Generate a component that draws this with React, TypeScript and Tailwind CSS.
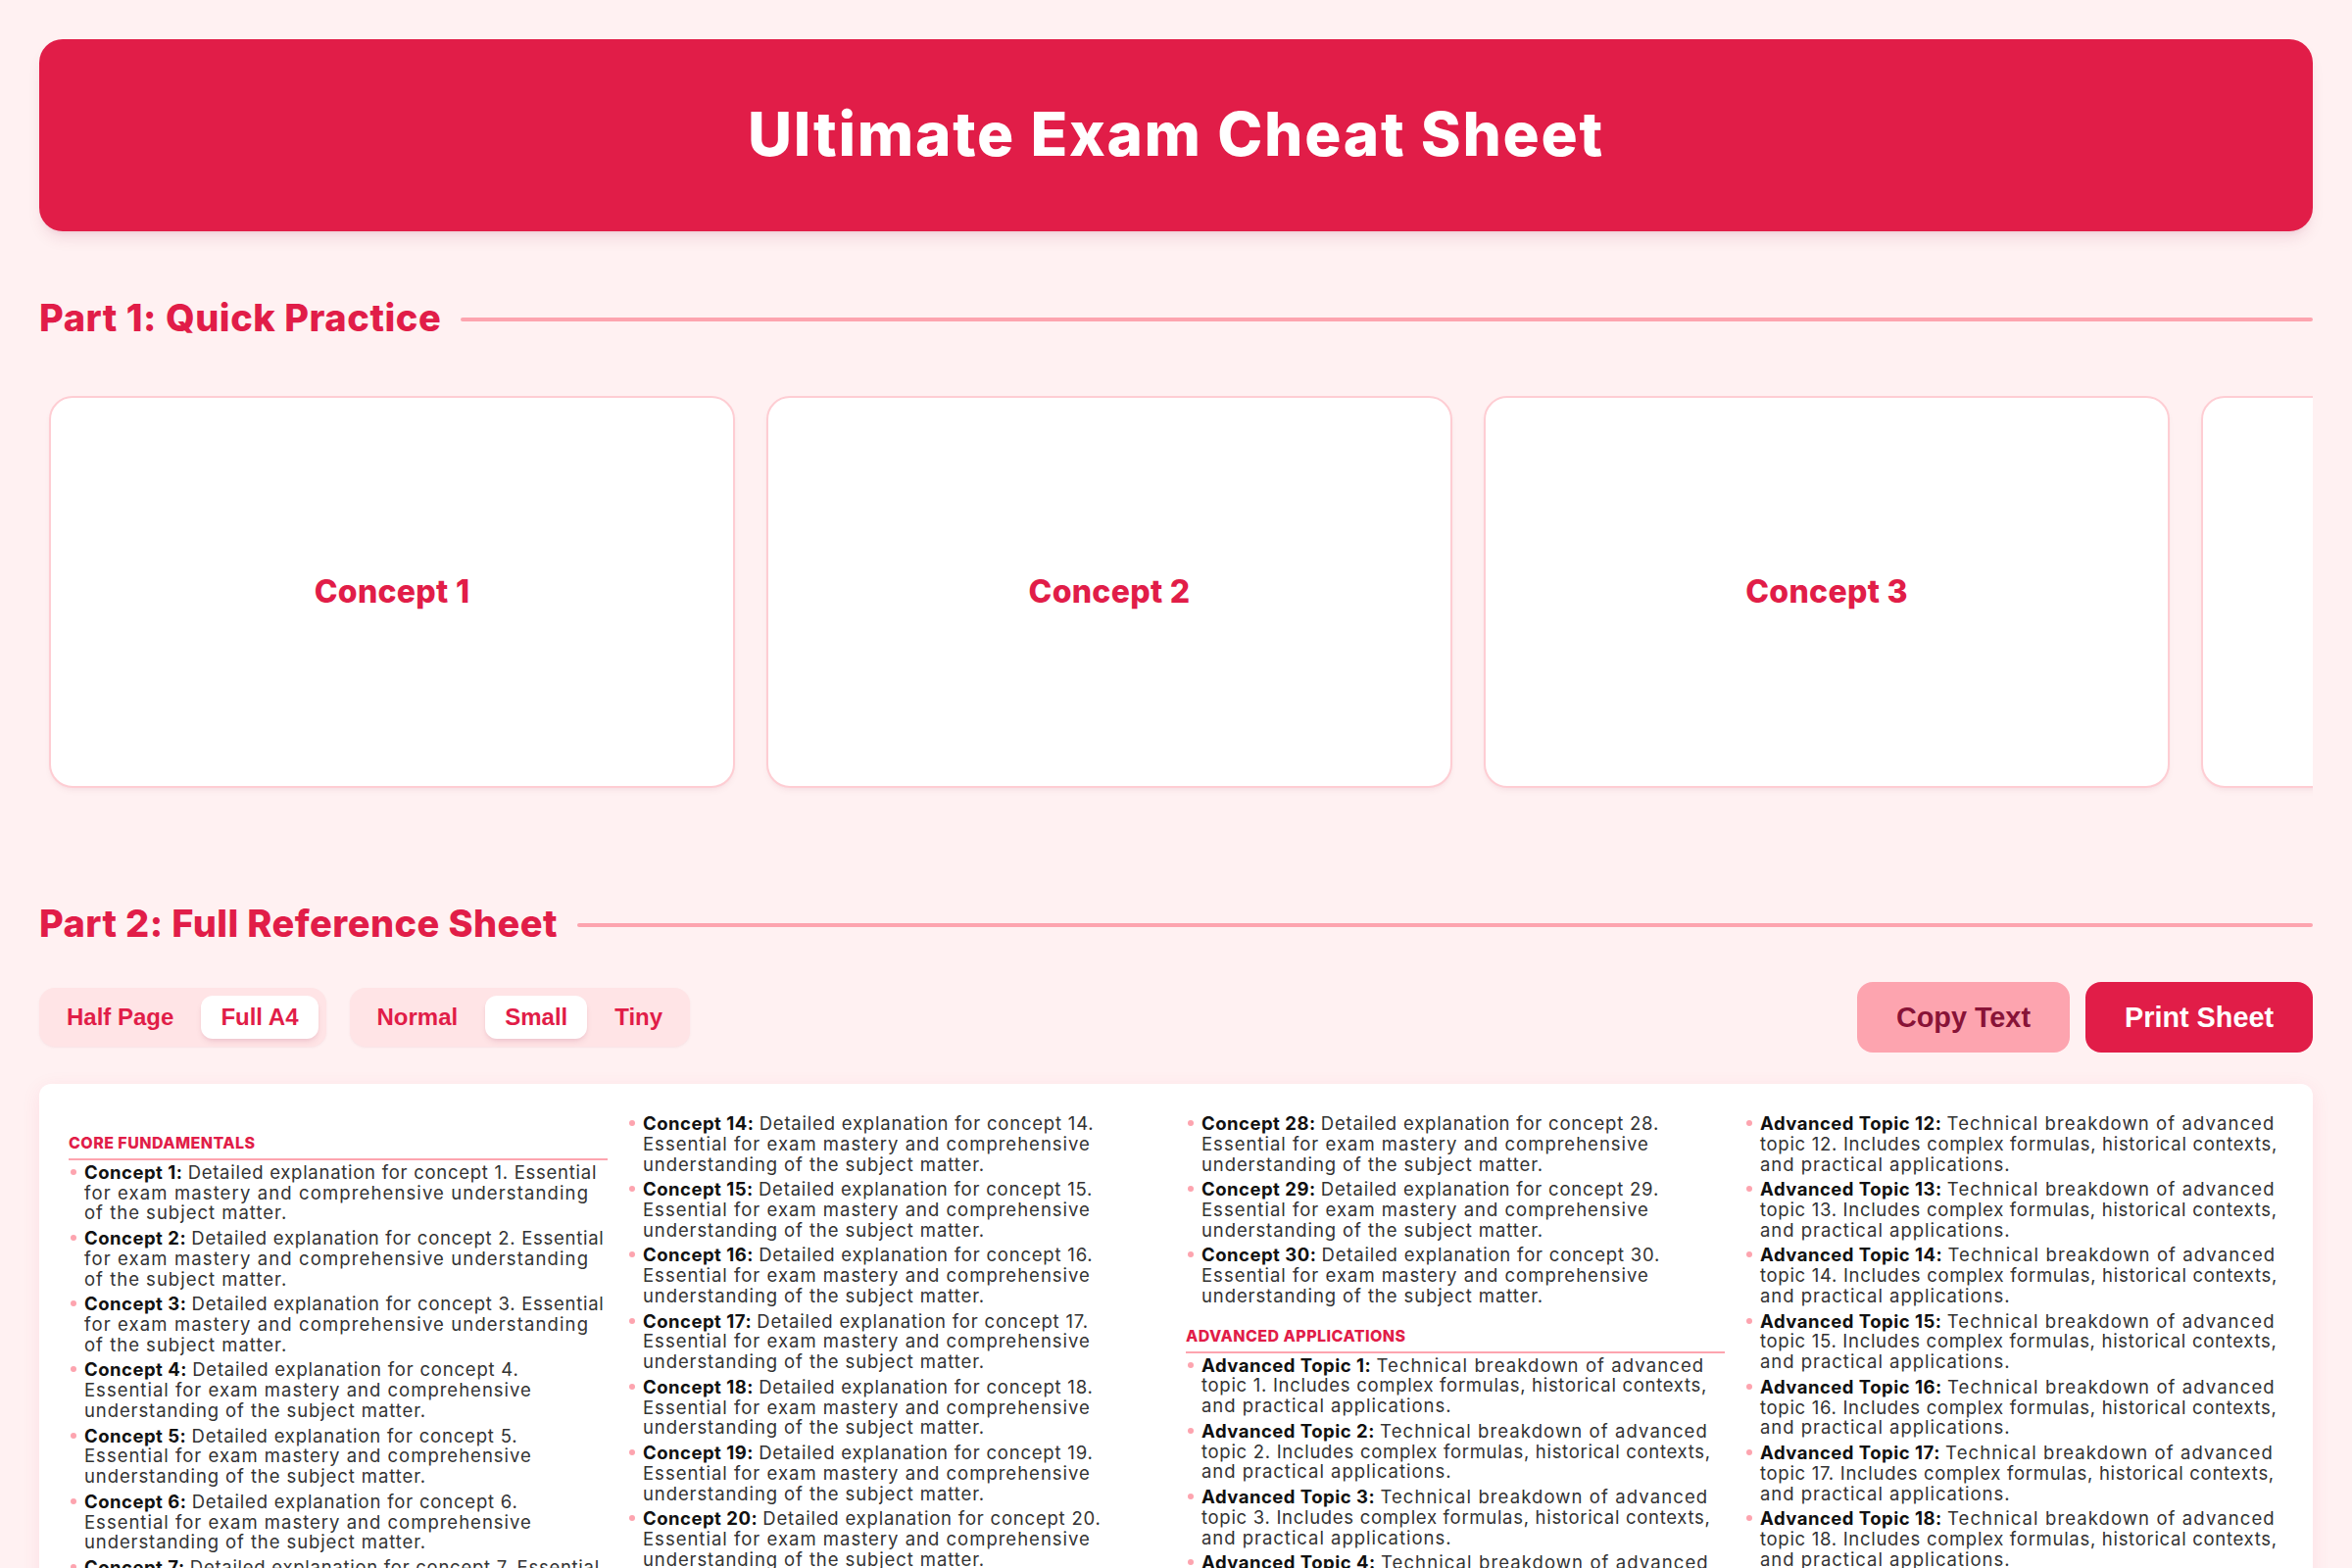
import React from "react";

const body = "font-['Inter',sans-serif]";

function SectionTitle({ children, tracking }: { children: React.ReactNode; tracking: string }) {
  return (
    <div className="flex items-center gap-5 h-[60px]">
      <h2 className={`mb-1 text-[38px] leading-[56px] font-extrabold text-[#e11d48] whitespace-nowrap ${tracking}`}>{children}</h2>
      <div className="flex-1 h-1 rounded-full bg-[#fda4af]" />
    </div>
  );
}

function Card({ label }: { label: string }) {
  return (
    <div className="shrink-0 w-[700px] h-[400px] rounded-3xl border-2 border-[#fecdd3] bg-white shadow-md shadow-rose-900/5 flex items-center justify-center">
      <span className="text-[32px] font-extrabold text-[#e11d48] tracking-[0.3px]">{label}</span>
    </div>
  );
}

function Toggle({ items, active }: { items: string[]; active: string }) {
  return (
    <div className="flex gap-2 p-2 rounded-2xl bg-[#ffe4e6] shadow-sm shadow-rose-900/5 font-['Liberation_Sans',sans-serif]">
      {items.map((t) => (
        <span
          key={t}
          className={
            t === active
              ? "px-5 h-11 leading-[44px] text-2xl font-bold text-[#e11d48] bg-white rounded-xl shadow-md shadow-rose-900/10"
              : "px-5 h-11 leading-[44px] text-2xl font-bold text-[#e11d48]"
          }
        >
          {t}
        </span>
      ))}
    </div>
  );
}

type Line = { text: string; tracking: string };

function Item({ title, lines, newColumn }: { title: string; lines: Line[]; newColumn?: boolean }) {
  return (
    <div
      className={`flex break-inside-avoid mb-[4.8px] text-[18.5px] leading-[20.8px] text-[#333] whitespace-nowrap ${newColumn ? "break-before-column" : ""}`}
    >
      <span className="shrink-0 w-1.5 h-1.5 rounded-full bg-[#fda4af] ml-[2px] mt-[7px] mr-2" />
      <p className="flex-1 min-w-0">
        <strong className="font-bold text-[#111] tracking-[0.5px]">{title}:</strong>{" "}
        <span className={lines[0].tracking}>{lines[0].text}</span>
        <br />
        <span className={lines[1].tracking}>{lines[1].text}</span>
        <br />
        <span className={lines[2].tracking}>{lines[2].text}</span>
      </p>
    </div>
  );
}

function Heading({ children }: { children: React.ReactNode }) {
  return (
    <h3 className="mt-5 mb-[2px] pb-[5px] border-b-2 border-[#fda4af] text-[16px] leading-[20.8px] font-extrabold uppercase text-[#e11d48] tracking-[0.45px] break-after-avoid">
      {children}
    </h3>
  );
}

const range = (n: number) => Array.from({ length: n }, (_, i) => i + 1);

const conceptLines = (i: number): Line[] =>
  i <= 3 || i === 7
    ? [
        { text: `Detailed explanation for concept ${i}. Essential`, tracking: "tracking-[0.73px]" },
        { text: "for exam mastery and comprehensive understanding", tracking: "tracking-[1.12px]" },
        { text: "of the subject matter.", tracking: "tracking-[1px]" },
      ]
    : [
        { text: `Detailed explanation for concept ${i}.`, tracking: "tracking-[0.8px]" },
        { text: "Essential for exam mastery and comprehensive", tracking: "tracking-[1px]" },
        { text: "understanding of the subject matter.", tracking: "tracking-[0.9px]" },
      ];

const topicLines = (i: number): Line[] => [
  { text: "Technical breakdown of advanced", tracking: "tracking-[1.1px]" },
  { text: `topic ${i}. Includes complex formulas, historical contexts,`, tracking: "tracking-[0.7px]" },
  { text: "and practical applications.", tracking: "tracking-[0.97px]" },
];

export default function App() {
  return (
    <div className={`min-h-screen bg-[#fff1f2] p-10 ${body}`}>
      <header className="h-[196px] rounded-3xl bg-[#e11d48] shadow-lg shadow-rose-900/10 flex items-center justify-center">
        <h1 className="pb-1 text-[62px] font-extrabold text-white tracking-[1.75px]">Ultimate Exam Cheat Sheet</h1>
      </header>

      <section className="mt-[60px]">
        <SectionTitle tracking="tracking-[0.55px]">Part 1: Quick Practice</SectionTitle>
        <div className="mt-7 flex gap-8 overflow-hidden px-2.5 py-5">
          <Card label="Concept 1" />
          <Card label="Concept 2" />
          <Card label="Concept 3" />
          <Card label="Concept 4" />
        </div>
      </section>

      <section className="mt-[90px]">
        <SectionTitle tracking="tracking-[0.42px]">Part 2: Full Reference Sheet</SectionTitle>
        <div className="mt-7 h-[72px] flex items-center justify-between">
          <div className="flex gap-6">
            <Toggle items={["Half Page", "Full A4"]} active="Full A4" />
            <Toggle items={["Normal", "Small", "Tiny"]} active="Small" />
          </div>
          <div className="flex gap-4 font-['Liberation_Sans',sans-serif] text-[28.8px] leading-[72px] font-bold">
            <button className="h-[72px] px-10 rounded-2xl bg-[#fda4af] text-[#881337]">Copy Text</button>
            <button className="h-[72px] px-10 rounded-2xl bg-[#e11d48] text-white">Print Sheet</button>
          </div>
        </div>
        <div className="mt-8 rounded-xl bg-white shadow-[0_4px_20px_rgba(225,29,72,0.08)] p-[30px]">
          <div className="columns-4 gap-5 h-[1040px] [column-fill:auto]">
            <Heading>Core Fundamentals</Heading>
            {range(30).map((i) => (
              <Item key={i} title={`Concept ${i}`} lines={conceptLines(i)} newColumn={i === 14 || i === 28} />
            ))}
            <Heading>Advanced Applications</Heading>
            {range(25).map((i) => (
              <Item key={i} title={`Advanced Topic ${i}`} lines={topicLines(i)} newColumn={i === 12} />
            ))}
          </div>
        </div>
      </section>
    </div>
  );
}
